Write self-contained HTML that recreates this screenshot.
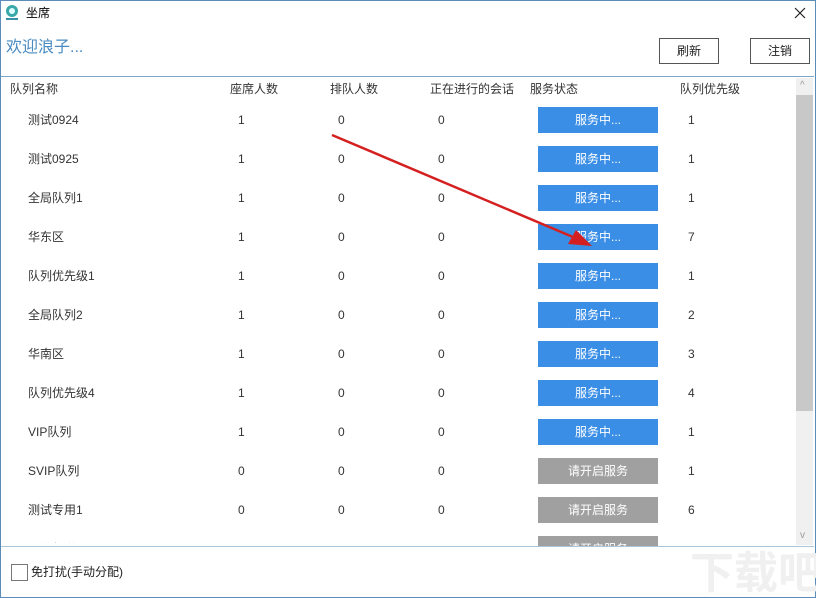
<!DOCTYPE html><html><head><meta charset="utf-8"><style>
body{margin:0;width:816px;height:598px;overflow:hidden;background:#fff;font-family:"Liberation Sans","Noto Sans CJK SC",sans-serif;font-size:12px;color:#333;position:relative}
.a{position:absolute;white-space:nowrap;line-height:20px}
.btn{position:absolute;width:120px;height:26px;line-height:26px;text-align:center;color:#fff;font-size:12px}
</style></head><body>
<div class="a" style="left:0;top:0;width:814px;height:596px;border:1px solid #5b8db8"></div>
<svg class="a" style="left:4px;top:4px" width="18" height="18" viewBox="0 0 18 18"><circle cx="8" cy="7" r="6" fill="#3aa8a8"/><circle cx="8" cy="7" r="3" fill="#dff"/><rect x="2" y="14" width="12" height="2" fill="#3a8fa8"/></svg>
<div class="a" style="left:26px;top:3px;font-size:12px;color:#000">坐席</div>
<svg class="a" style="left:794px;top:7px" width="12" height="12"><path d="M1 1L11 11M11 1L1 11" stroke="#222" stroke-width="1.2"/></svg>
<div class="a" style="left:6px;top:38px;font-size:16px;color:#4a8bc2">欢迎浪子...</div>
<div class="a" style="left:659px;top:38px;width:58px;height:24px;border:1px solid #555;text-align:center;line-height:24px;color:#222">刷新</div>
<div class="a" style="left:750px;top:38px;width:58px;height:24px;border:1px solid #555;text-align:center;line-height:24px;color:#222">注销</div>
<div class="a" style="left:1px;top:76px;width:813px;height:1px;background:#7aa6c8"></div>
<div class="a" style="left:1px;top:546px;width:813px;height:1px;background:#a8c6dc"></div>
<div class="a" style="left:796px;top:78px;width:17px;height:467px;background:#f0f0f0"></div>
<div class="a" style="left:796px;top:95px;width:17px;height:316px;background:#c8c8c8"></div>
<div class="a" style="left:800px;top:76px;font-size:10px;color:#999">^</div>
<div class="a" style="left:800px;top:526px;font-size:10px;color:#999">v</div>
<div class="a" style="left:10px;top:79px">队列名称</div><div class="a" style="left:230px;top:79px">座席人数</div><div class="a" style="left:330px;top:79px">排队人数</div><div class="a" style="left:430px;top:79px">正在进行的会话</div><div class="a" style="left:530px;top:79px">服务状态</div><div class="a" style="left:680px;top:79px">队列优先级</div>
<div id="rows"></div>
<div class="a" style="left:11px;top:564px;width:15px;height:15px;border:1px solid #777"></div>
<div class="a" style="left:31px;top:562px;color:#222">免打扰(手动分配)</div>
<svg class="a" style="left:0;top:0" width="816" height="546"><line x1="332" y1="135" x2="580" y2="240" stroke="#d42020" stroke-width="2.5"/><polygon points="592,246 568,244 576,230" fill="#d42020"/></svg>
<div class="a" style="left:690px;top:550px;font-size:44px;line-height:48px;color:#f0f0f0;font-weight:bold">下载吧</div>
<script>
var d=[["测试0924",1,1,1],["测试0925",1,1,1],["全局队列1",1,1,1],["华东区",1,7,1],["队列优先级1",1,1,1],["全局队列2",1,2,1],["华南区",1,3,1],["队列优先级4",1,4,1],["VIP队列",1,1,1],["SVIP队列",0,1,0],["测试专用1",0,6,0],["运维频道",0,2,0]];
var h="";d.forEach(function(r,i){var y=120+39*i;if(y>560)return;var c=y<540?"":"clip-path:inset(0 0 "+(y+13-546)+"px 0);";var t=y-10;
h+='<div class="a" style="left:28px;top:'+t+'px;'+c+'">'+r[0]+'</div><div class="a" style="left:238px;top:'+t+'px;'+c+'">'+r[1]+'</div><div class="a" style="left:338px;top:'+t+'px;'+c+'">0</div><div class="a" style="left:438px;top:'+t+'px;'+c+'">0</div><div class="btn" style="left:538px;top:'+(y-13)+'px;background:'+(r[3]?'#3a8ee6':'#a0a0a0')+';'+c+'">'+(r[3]?'服务中...':'请开启服务')+'</div><div class="a" style="left:688px;top:'+t+'px;'+c+'">'+r[2]+'</div>';});
document.getElementById("rows").innerHTML=h;
</script>
</body></html>
